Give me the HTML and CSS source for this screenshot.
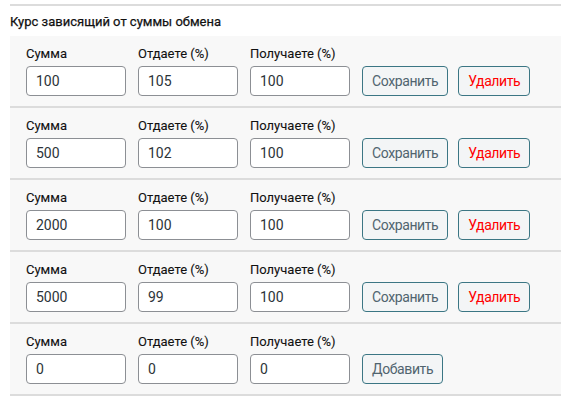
FILE: index.html
```html
<!DOCTYPE html>
<html lang="ru">
<head>
<meta charset="utf-8">
<link rel="stylesheet" href="styles.css">
</head>
<body>
<div class="wrap">
  <h3 class="title">Курс зависящий от суммы обмена</h3>
  <div class="rows">
    <div class="row">
      <label class="field"><span class="lbl">Сумма</span><input class="inp" type="text" value="100"></label>
      <label class="field"><span class="lbl">Отдаете (%)</span><input class="inp" type="text" value="105"></label>
      <label class="field"><span class="lbl">Получаете (%)</span><input class="inp" type="text" value="100"></label>
      <button class="btn">Сохранить</button>
      <button class="btn del">Удалить</button>
    </div>
    <div class="row">
      <label class="field"><span class="lbl">Сумма</span><input class="inp" type="text" value="500"></label>
      <label class="field"><span class="lbl">Отдаете (%)</span><input class="inp" type="text" value="102"></label>
      <label class="field"><span class="lbl">Получаете (%)</span><input class="inp" type="text" value="100"></label>
      <button class="btn">Сохранить</button>
      <button class="btn del">Удалить</button>
    </div>
    <div class="row">
      <label class="field"><span class="lbl">Сумма</span><input class="inp" type="text" value="2000"></label>
      <label class="field"><span class="lbl">Отдаете (%)</span><input class="inp" type="text" value="100"></label>
      <label class="field"><span class="lbl">Получаете (%)</span><input class="inp" type="text" value="100"></label>
      <button class="btn">Сохранить</button>
      <button class="btn del">Удалить</button>
    </div>
    <div class="row">
      <label class="field"><span class="lbl">Сумма</span><input class="inp" type="text" value="5000"></label>
      <label class="field"><span class="lbl">Отдаете (%)</span><input class="inp" type="text" value="99"></label>
      <label class="field"><span class="lbl">Получаете (%)</span><input class="inp" type="text" value="100"></label>
      <button class="btn">Сохранить</button>
      <button class="btn del">Удалить</button>
    </div>
    <div class="row">
      <label class="field"><span class="lbl">Сумма</span><input class="inp" type="text" value="0"></label>
      <label class="field"><span class="lbl">Отдаете (%)</span><input class="inp" type="text" value="0"></label>
      <label class="field"><span class="lbl">Получаете (%)</span><input class="inp" type="text" value="0"></label>
      <button class="btn">Добавить</button>
    </div>
  </div>
</div>
</body>
</html>
```
FILE: styles.css
```css
* { box-sizing: border-box; }
html, body { margin: 0; padding: 0; background: #fff; }
body { font-family: Roboto, "Noto Sans", sans-serif; color: #1d2327; }
.wrap {
  margin: 4px 0 0 10px;
  border-top: 2px solid #dcdcdc;
}
.title {
  margin: 0;
  font-size: 13px;
  font-weight: 400;
  line-height: 16px;
  padding: 8px 0 6px 0;
  color: #111;
  -webkit-text-stroke: 0.25px #111;
}
.row {
  display: flex;
  align-items: flex-end;
  gap: 12px;
  padding: 10px 16px 10px 16px;
  background: #f8f8f8;
  border-bottom: 2px solid #dcdcdc;
}
.field {
  display: flex;
  flex-direction: column;
  gap: 4px;
  width: 100px;
}
.lbl {
  font-size: 13px;
  font-weight: 400;
  line-height: 16px;
  color: #111;
  -webkit-text-stroke: 0.1px #111;
}
.inp {
  width: 100px;
  height: 30px;
  border: 1px solid #8c8f94;
  border-radius: 4px;
  background: #fff;
  padding: 0 9px;
  font-family: Roboto, "Noto Sans", sans-serif;
  font-size: 14px;
  color: #2c3338;
  outline: none;
}
.btn {
  height: 30px;
  padding: 0 9px;
  border: 1px solid #3b7684;
  border-radius: 4px;
  background: #f3f5f6;
  font-family: Roboto, "Noto Sans", sans-serif;
  font-size: 14px;
  letter-spacing: -0.4px;
  color: #50646f;
  cursor: pointer;
}
.btn + .btn { margin-left: -2px; }
.btn.del { color: #ff0000; }
```
